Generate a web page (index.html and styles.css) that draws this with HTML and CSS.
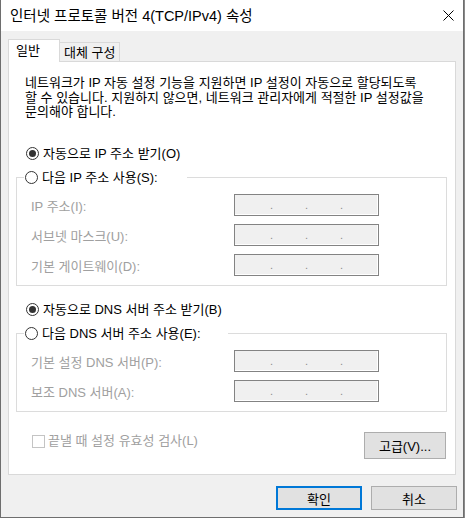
FILE: index.html
```html
<!DOCTYPE html>
<html lang="ko">
<head>
    <meta charset="UTF-8">
    <meta name="viewport" content="width=device-width, initial-scale=1.0">
    <title>인터넷 프로토콜 버전 4(TCP/IPv4) 속성</title>
    <link rel="stylesheet" href="styles.css">
</head>
<body>
    <div class="window">
        <div class="titlebar">
            <span class="title">인터넷 프로토콜 버전 4(TCP/IPv4) 속성</span>
            <svg class="close" width="11" height="11" viewBox="0 0 11 11">
                <path d="M0.5 0.5L10.5 10.5M10.5 0.5L0.5 10.5" stroke="#000" stroke-width="1" fill="none"/>
            </svg>
        </div>

        <div class="content">
            <div class="tabs">
                <div class="tab active">일반</div>
                <div class="tab">대체 구성</div>
            </div>

            <div class="panel">
                <p class="intro">
                    네트워크가 IP 자동 설정 기능을 지원하면 IP 설정이 자동으로 할당되도록<br>
                    할 수 있습니다. 지원하지 않으면, 네트워크 관리자에게 적절한 IP 설정값을<br>
                    문의해야 합니다.
                </p>

                <div class="radio-row top-radio"><span class="radio checked"></span>자동으로 IP 주소 받기(O)</div>

                <fieldset class="group">
                    <legend class="radio-row legend-ip"><span class="radio"></span>다음 IP 주소 사용(S):</legend>
                    <div class="field-row">
                        <span class="field-label">IP 주소(I):</span>
                        <span class="ip-box"><span>.</span><span>.</span><span>.</span></span>
                    </div>
                    <div class="field-row">
                        <span class="field-label">서브넷 마스크(U):</span>
                        <span class="ip-box"><span>.</span><span>.</span><span>.</span></span>
                    </div>
                    <div class="field-row">
                        <span class="field-label">기본 게이트웨이(D):</span>
                        <span class="ip-box"><span>.</span><span>.</span><span>.</span></span>
                    </div>
                </fieldset>

                <div class="radio-row mid-radio"><span class="radio checked"></span>자동으로 DNS 서버 주소 받기(B)</div>

                <fieldset class="group">
                    <legend class="radio-row legend-dns"><span class="radio"></span>다음 DNS 서버 주소 사용(E):</legend>
                    <div class="field-row">
                        <span class="field-label">기본 설정 DNS 서버(P):</span>
                        <span class="ip-box"><span>.</span><span>.</span><span>.</span></span>
                    </div>
                    <div class="field-row">
                        <span class="field-label">보조 DNS 서버(A):</span>
                        <span class="ip-box"><span>.</span><span>.</span><span>.</span></span>
                    </div>
                </fieldset>

                <div class="panel-foot">
                    <div class="check-row"><span class="checkbox"></span>끝낼 때 설정 유효성 검사(L)</div>
                    <button class="btn btn-adv">고급(V)...</button>
                </div>
            </div>

            <div class="dialog-buttons">
                <button class="btn btn-dialog btn-default">확인</button>
                <button class="btn btn-dialog">취소</button>
            </div>
        </div>
    </div>
</body>
</html>
```

FILE: styles.css
```css
html, body { margin: 0; padding: 0; background-color: #8a8a8a; }
body { font-family: "Liberation Sans", "Noto Sans CJK KR", sans-serif; font-size: 13px; color: #000; }

.window { width: 464px; height: 518px; box-sizing: border-box; background-color: #f0f0f0; border: 1px solid #6e6e6e; border-top: none; display: flex; flex-direction: column; }

/* title bar */
.titlebar { height: 31px; flex: none; background-color: #fff; display: flex; align-items: center; justify-content: space-between; padding: 0 9px 0 9px; }
.title { font-size: 14.5px; line-height: 20px; }
.close { display: block; }

.content { padding: 8px 7px 0 7px; }

/* tabs */
.tabs { display: flex; align-items: flex-end; height: 22px; }
.tab { box-sizing: border-box; border: 1px solid #d9d9d9; border-bottom: none; line-height: 17px; white-space: nowrap; }
.tab.active { height: 23px; width: 52px; margin-bottom: -1px; padding: 2px 0 0 7px; background-color: #fff; position: relative; z-index: 1; }
.tab:not(.active) { height: 19px; width: 60px; border-left: none; padding: 0 0 0 4px; line-height: 20px; background-color: #f0f0f0; }

/* white page */
.panel { height: 414px; box-sizing: border-box; background-color: #fff; border: 1px solid #d9d9d9; }
.intro { margin: 14px 0 0 16px; line-height: 14.5px; white-space: nowrap; }

.radio-row { display: flex; align-items: center; line-height: 20px; height: 20px; gap: 4px; }
.top-radio { margin: 24px 0 0 16px; }
.mid-radio { margin: 13.5px 0 0 16px; }
.radio { width: 13px; height: 13px; box-sizing: border-box; border: 1px solid #333; border-radius: 50%; background-color: #fff; display: flex; align-items: center; justify-content: center; margin-left: 1px; flex: none; }
.radio.checked::after { content: ""; width: 7px; height: 7px; border-radius: 50%; background-color: #333; }

/* group boxes */
.group { margin: 4px 8px 0 7px; padding: 6.5px 0 9px 0; border: 1px solid #dcdcdc; min-inline-size: 0; display: flex; flex-direction: column; gap: 8px; }
.group legend { padding: 0; margin-left: 7px; box-sizing: border-box; }
.legend-ip { width: 163px; }
.legend-dns { width: 204px; }

.field-row { display: flex; align-items: center; padding-left: 14px; height: 22px; }
.field-label { width: 203px; color: #a0a0a0; }
.ip-box { width: 145px; height: 22px; box-sizing: border-box; border: 1px solid #838383; box-shadow: inset -1px -1px 0 #fff; background-color: #f0f0f0; display: flex; justify-content: center; gap: 32px; line-height: 20px; color: #8c8c8c; font-size: 11px; }

/* bottom of page */
.panel-foot { display: flex; justify-content: space-between; align-items: flex-start; margin: 20px 9px 0 23px; }
.check-row { display: flex; align-items: center; gap: 3px; line-height: 18px; height: 18px; color: #a0a0a0; }
.checkbox { width: 13px; height: 13px; box-sizing: border-box; border: 1px solid #c4c4c4; background-color: #fff; }

.btn { font-family: inherit; font-size: 13px; color: #000; background-color: #e1e1e1; border: 1px solid #adadad; padding: 0; box-sizing: border-box; }
.btn-adv { width: 82px; height: 27px; }

.dialog-buttons { display: flex; justify-content: flex-end; gap: 9px; margin: 11px -1px 0 0; }
.btn-dialog { width: 86px; height: 24px; }
.btn-default { border: 2px solid #0078d7; }
```
